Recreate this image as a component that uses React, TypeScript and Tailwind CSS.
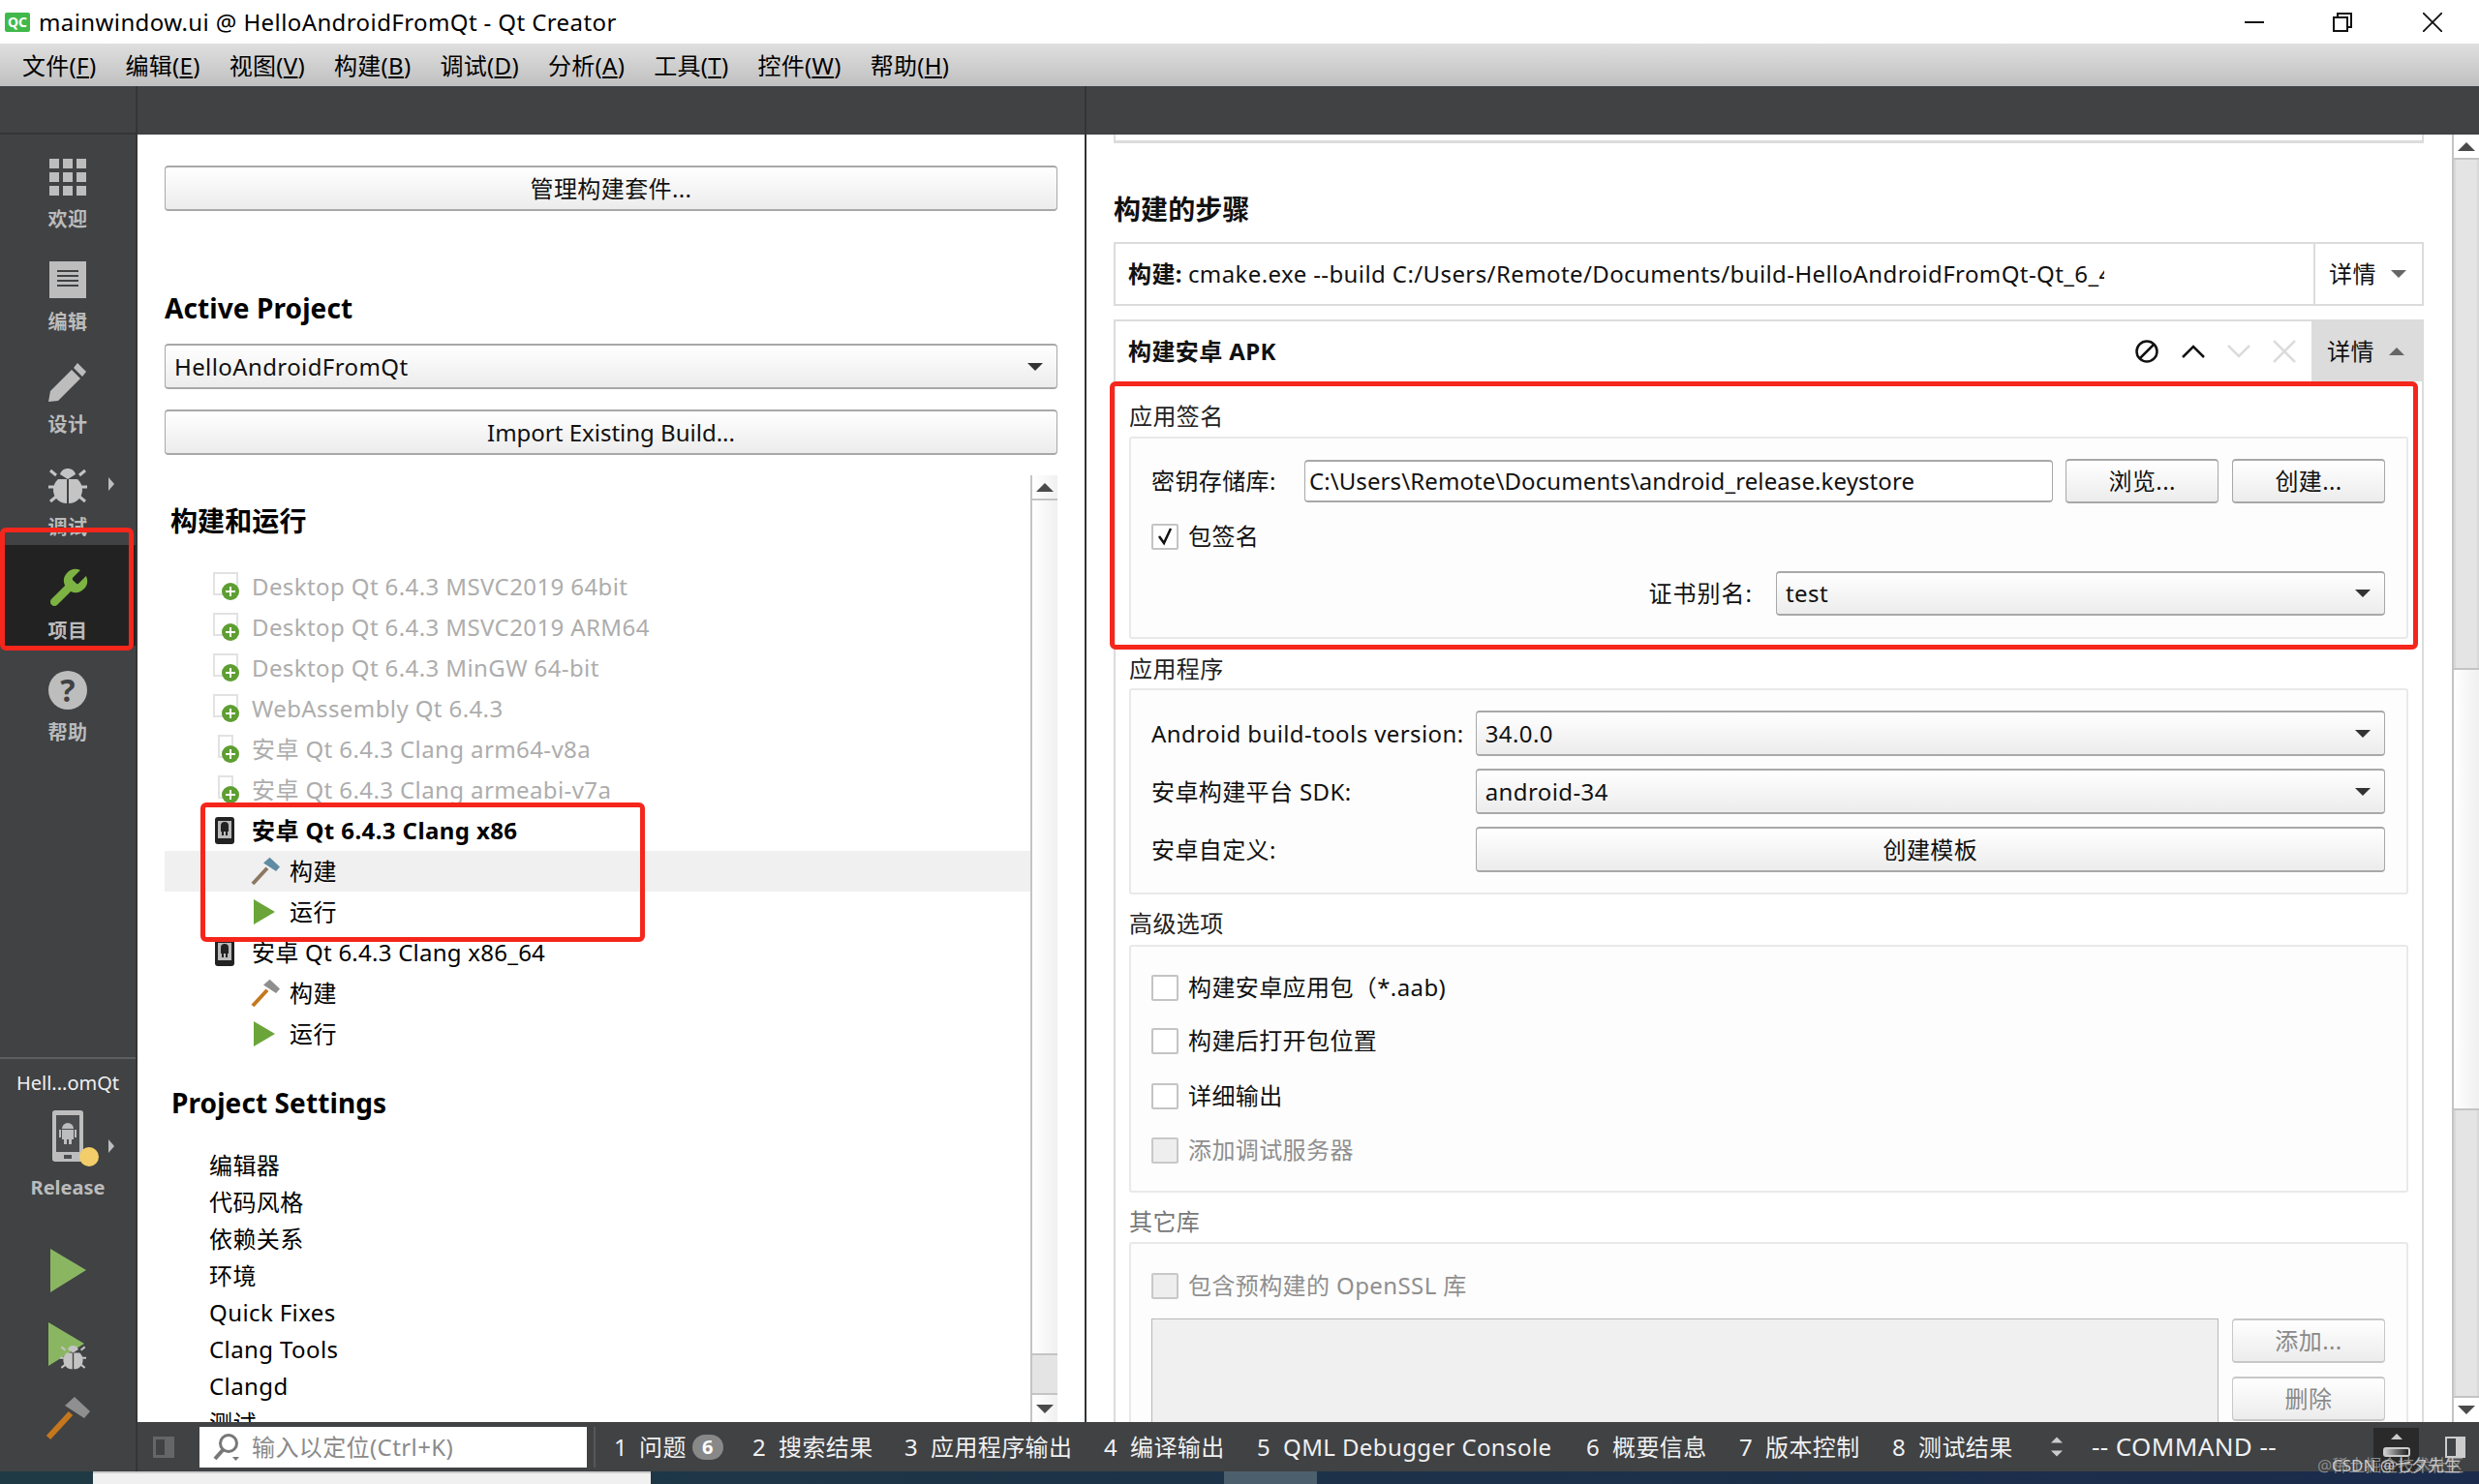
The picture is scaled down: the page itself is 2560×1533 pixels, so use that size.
import React from "react";

const GridIcon = () => (
  <svg width="38" height="38" viewBox="0 0 38 38" fill="#bdbdbd">
    {[0, 14, 28].map((y) => [0, 14, 28].map((x) => <rect key={`${x}-${y}`} x={x} y={y} width="10" height="10" />))}
  </svg>
);
const DocIcon = () => (
  <svg width="38" height="38" viewBox="0 0 38 38">
    <rect width="38" height="38" fill="#bdbdbd" />
    <path d="M8 10h22M8 15h22M8 20h22M8 25h22" stroke="#404244" strokeWidth="2" fill="none" />
  </svg>
);
const PencilIcon = () => (
  <svg width="40" height="40" viewBox="0 0 40 40" fill="#bdbdbd">
    <path d="M30 0l9 9-4 5-9-9z" />
    <path d="M24 7l9 9-23 23L0 40l2-11z" />
  </svg>
);
const BugIcon = ({ s = 40 }: { s?: number }) => (
  <svg width={s} height={s} viewBox="0 0 40 40" fill="#c4c4c4">
    <path d="M12 9c2-8 14-8 16 0l-8 5z" />
    <path d="M19 14v25C10 39 5 32 5 25c0-5 2-8 5-11z" />
    <path d="M21 14v25c9 0 14-7 14-14 0-5-2-8-5-11z" />
    <path d="M8 10L2 5M32 10l6-5M7 22H0M33 22h7M8 32l-6 5M32 32l6 5" stroke="#c4c4c4" strokeWidth="3" fill="none" />
  </svg>
);
const WrenchIcon = () => (
  <svg width="42" height="42" viewBox="1.5 1.5 21 21" fill="#7cb342">
    <path d="M14.7 6.3a1 1 0 0 0 0 1.4l1.6 1.6a1 1 0 0 0 1.4 0l3.77-3.77a6 6 0 0 1-7.94 7.94l-6.91 6.91a2.12 2.12 0 0 1-3-3l6.91-6.91a6 6 0 0 1 7.94-7.94l-3.76 3.76z" />
  </svg>
);
const HelpIcon = () => (
  <div className="flex h-[40px] w-[40px] items-center justify-center rounded-full bg-[#bdbdbd] text-[32px] font-bold leading-none text-[#404244]">?</div>
);
const PhoneSide = () => (
  <svg width="50" height="58" viewBox="0 0 50 58">
    <rect x="0" y="0" width="32" height="53" rx="3" fill="#bdbdbd" />
    <rect x="4" y="5" width="24" height="38" fill="#4a4c4e" />
    <rect x="12" y="46" width="8" height="4" fill="#4a4c4e" />
    <path d="M10 19a6 6 0 0 1 12 0z" fill="#bdbdbd" />
    <rect x="10" y="20" width="12" height="10" fill="#bdbdbd" />
    <rect x="7" y="20" width="2" height="8" fill="#bdbdbd" />
    <rect x="23" y="20" width="2" height="8" fill="#bdbdbd" />
    <rect x="12" y="30" width="3" height="5" fill="#bdbdbd" />
    <rect x="17" y="30" width="3" height="5" fill="#bdbdbd" />
    <circle cx="38" cy="48" r="10" fill="#f3cd69" />
  </svg>
);
const PlayBig = () => (
  <svg width="37" height="45" viewBox="0 0 37 45"><path d="M0 0l37 22L0 45z" fill="#8ab661" /></svg>
);
const PlayDebug = () => (
  <div className="relative h-[46px] w-[40px]">
    <PlayBig />
    <div className="absolute left-[12px] top-[22px]"><BugIcon s={27} /></div>
  </div>
);
const Hammer = ({ head = "#8f8f8f", handle = "#c4771d", s = 46 }: { head?: string; handle?: string; s?: number }) => (
  <svg width={s} height={s} viewBox="0 0 46 46">
    <path d="M26 18L3 43" stroke={handle} strokeWidth="6" fill="none" />
    <path d="M20 10l10-9 16 15-6 7z" fill={head} />
  </svg>
);
const Arrow = ({ up = false, c = "#444", w = 18, h = 9 }: { up?: boolean; c?: string; w?: number; h?: number }) => (
  <svg width={w} height={h} viewBox="0 0 18 9">
    <path d={up ? "M0 9L9 0l9 9z" : "M0 0l9 9 9-9z"} fill={c} />
  </svg>
);
const SideArrow = () => (
  <svg width="6" height="14" viewBox="0 0 6 14"><path d="M0 0l6 7-6 7z" fill="#bdbdbd" /></svg>
);
const KitIcon = ({ narrow = false }: { narrow?: boolean }) => (
  <svg width="30" height="30" viewBox="0 0 30 30">
    <rect x={narrow ? 6 : 1} y="1" width={narrow ? 14 : 24} height="22" fill="none" stroke="#e2e2e2" strokeWidth="2" />
    <circle cx="18" cy="20" r="9" fill="#5e9e32" />
    <path d="M18 15v10M13 20h10" stroke="#fff" strokeWidth="2" />
  </svg>
);
const PhoneDark = () => (
  <svg width="20" height="28" viewBox="0 0 20 28">
    <rect width="20" height="28" rx="3" fill="#222" />
    <rect x="3" y="4" width="14" height="18" fill="#bbb" />
    <path d="M6 9a4 4 0 0 1 8 0v6H6z" fill="#222" />
    <rect x="7" y="15" width="2" height="4" fill="#222" />
    <rect x="11" y="15" width="2" height="4" fill="#222" />
  </svg>
);
const PlaySmall = () => (
  <svg width="22" height="26" viewBox="0 0 22 26"><path d="M0 0l22 13L0 26z" fill="#6ba53a" /></svg>
);

const menuItems: [string, string][] = [
  ["文件", "F"], ["编辑", "E"], ["视图", "V"], ["构建", "B"], ["调试", "D"], ["分析", "A"], ["工具", "T"], ["控件", "W"], ["帮助", "H"],
];

const SideItem = ({ icon, label, h = "h-[106px]", active = false, pt = "pt-[24px]", arrow = false }: { icon: React.ReactNode; label: string; h?: string; active?: boolean; pt?: string; arrow?: boolean }) => (
  <div className={`relative flex flex-col items-center ${h} ${pt} ${active ? "bg-[#222222]" : ""} w-full`}>
    <div className="flex h-[40px] items-center">{icon}</div>
    <div className="mt-[10px] text-[20px] font-bold leading-[28px] text-[#bbbbbb]">{label}</div>
    {arrow && <div className="absolute left-[112px] top-[36px]"><SideArrow /></div>}
  </div>
);

const Sidebar = () => (
  <div className="flex h-[1381px] w-[142px] shrink-0 flex-col border-r-2 border-[#333536] bg-[#404244]">
    <SideItem icon={<GridIcon />} label="欢迎" />
    <SideItem icon={<DocIcon />} label="编辑" />
    <SideItem icon={<PencilIcon />} label="设计" />
    <SideItem icon={<BugIcon />} label="调试" arrow />
    <SideItem icon={<WrenchIcon />} label="项目" h="h-[104px]" active pt="pt-[25px]" />
    <SideItem icon={<HelpIcon />} label="帮助" pt="pt-[26px]" />
    <div className="mt-auto flex h-[428px] flex-col items-center border-t-2 border-[#5c5e60]">
      <div className="mt-[11px] text-[20px] leading-[28px] tracking-normal text-[#f0f0f0]">Hell...omQt</div>
      <div className="relative mt-[14px] flex h-[58px] w-full justify-center pl-[18px]">
        <PhoneSide />
        <div className="absolute left-[112px] top-[30px]"><SideArrow /></div>
      </div>
      <div className="mt-[8px] text-[20px] font-bold leading-[28px] tracking-normal text-[#bbbbbb]">Release</div>
      <div className="mt-[49px]"><PlayBig /></div>
      <div className="mt-[31px]"><PlayDebug /></div>
      <div className="mt-[30px]"><Hammer /></div>
    </div>
  </div>
);

const Btn = ({ children, className = "", disabled = false }: { children: React.ReactNode; className?: string; disabled?: boolean }) => (
  <div className={`flex items-center justify-center rounded-[4px] border-x border-y-2 border-[#a8a8a8] bg-gradient-to-b from-white to-[#ececec] ${disabled ? "text-[#8a8a8a] border-[#c8c8c8]" : "text-[#111]"} ${className}`}>
    {children}
  </div>
);
const Combo = ({ text, className = "" }: { text: string; className?: string }) => (
  <div className={`flex items-center justify-between rounded-[4px] border-x border-y-2 border-[#a8a8a8] bg-gradient-to-b from-white to-[#ececec] pl-[9px] pr-[14px] text-[#111] ${className}`}>
    <span>{text}</span>
    <Arrow c="#333" w={16} h={8} />
  </div>
);

const kits: [string, boolean][] = [
  ["Desktop Qt 6.4.3 MSVC2019 64bit", false],
  ["Desktop Qt 6.4.3 MSVC2019 ARM64", false],
  ["Desktop Qt 6.4.3 MinGW 64-bit", false],
  ["WebAssembly Qt 6.4.3", false],
  ["安卓 Qt 6.4.3 Clang arm64-v8a", true],
  ["安卓 Qt 6.4.3 Clang armeabi-v7a", true],
];

const TreeRow = ({ icon, text, indent, className = "" }: { icon: React.ReactNode; text: string; indent: "kit" | "sub"; className?: string }) => (
  <div className={`flex h-[42px] items-center ${className}`}>
    {indent === "kit" ? (
      <div className="ml-[50px] flex w-[40px] items-center">{icon}</div>
    ) : (
      <div className="ml-[89px] flex w-[40px] items-center">{icon}</div>
    )}
    <span>{text}</span>
  </div>
);

const settings = ["编辑器", "代码风格", "依赖关系", "环境", "Quick Fixes", "Clang Tools", "Clangd", "测试"];

const LeftPanel = () => (
  <div className="flex h-[1330px] w-[978px] shrink-0 flex-col bg-white pl-[28px] text-[24px] leading-[30px]">
    <div className="w-[922px]">
      <Btn className="mt-[32px] h-[47px] w-full">管理构建套件...</Btn>
      <div className="flex h-[137px] items-center pt-[63px] text-[28px] font-bold tracking-[0.1px]">Active Project</div>
      <Combo text="HelloAndroidFromQt" className="h-[47px] w-full" />
      <Btn className="mt-[21px] h-[47px] w-full tracking-normal">Import Existing Build...</Btn>
    </div>
    <div className="mt-[21px] flex h-[978px] w-[922px] overflow-hidden">
      <div className="w-[894px] shrink-0 overflow-hidden">
        <div className="flex h-[94px] items-center pl-[6px] text-[28px] font-bold tracking-[0.1px]">构建和运行</div>
        {kits.map(([t, narrow]) => (
          <TreeRow key={t} icon={<KitIcon narrow={narrow} />} text={t} indent="kit" className="text-[#adadad]" />
        ))}
        <TreeRow icon={<div className="ml-[2px]"><PhoneDark /></div>} text="安卓 Qt 6.4.3 Clang x86" indent="kit" className="font-bold text-black" />
        <TreeRow icon={<Hammer s={30} head="#5f8ba3" handle="#8c7762" />} text="构建" indent="sub" className="bg-[#f0f0f0]" />
        <TreeRow icon={<div className="ml-[3px]"><PlaySmall /></div>} text="运行" indent="sub" />
        <TreeRow icon={<div className="ml-[2px]"><PhoneDark /></div>} text="安卓 Qt 6.4.3 Clang x86_64" indent="kit" className="tracking-[0.25px]" />
        <TreeRow icon={<Hammer s={30} head="#8f8f8f" handle="#c4771d" />} text="构建" indent="sub" />
        <TreeRow icon={<div className="ml-[3px]"><PlaySmall /></div>} text="运行" indent="sub" />
        <div className="flex h-[96px] items-center pl-[7px] pt-[4px] text-[28px] font-bold tracking-[0.1px]">Project Settings</div>
        {settings.map((s) => (
          <div key={s} className="flex h-[38px] items-center pl-[46px]">{s}</div>
        ))}
      </div>
      <div className="flex w-[28px] shrink-0 flex-col border-l-2 border-[#c4c4c4] bg-gradient-to-r from-white to-[#f0f0f0]">
        <div className="flex h-[26px] items-center justify-center border-b-2 border-[#c4c4c4]"><Arrow up c="#4a4a4a" /></div>
        <div className="flex-1" />
        <div className="h-[43px] border-y-2 border-[#c4c4c4] bg-[#e4e4e4]" />
        <div className="flex h-[28px] items-center justify-center"><Arrow c="#4a4a4a" /></div>
      </div>
    </div>
  </div>
);

const Group = ({ title, className, children, labelH, disabled = false }: { title: string; className: string; children: React.ReactNode; labelH: string; disabled?: boolean }) => (
  <>
    <div className={`flex items-center ${labelH} ${disabled ? "text-[#777]" : "text-[#222]"}`}>{title}</div>
    <div className={`w-[1321px] rounded-[3px] border-2 border-[#e9e9e9] bg-[#fdfdfd] pl-[21px] pr-[22px] ${className}`}>{children}</div>
  </>
);

const Check = ({ label, checked = false, disabled = false, className = "" }: { label: string; checked?: boolean; disabled?: boolean; className?: string }) => (
  <div className={`flex items-center gap-[10px] ${disabled ? "text-[#8f8f8f]" : "text-[#111]"} ${className}`}>
    <div className={`flex h-[27px] w-[28px] items-center justify-center rounded-[2px] border-2 ${disabled ? "border-[#c8c8c8] bg-[#eeeeee]" : "border-[#c4c4c4] bg-white"}`}>
      {checked && (
        <svg width="20" height="20" viewBox="0 0 20 20"><path d="M4 10l5 7 7-15" stroke="#111" strokeWidth="2.5" fill="none" /></svg>
      )}
    </div>
    <span>{label}</span>
  </div>
);

const RightPanel = () => (
  <div className="flex h-[1330px] flex-1 border-l-2 border-[#333536] bg-white text-[24px] leading-[30px] text-[#111]">
    <div className="w-[1410px] shrink-0 overflow-hidden pl-[28px]">
      <div className="h-[9px] w-[1353px] border-x-2 border-b-[3px] border-[#dcdcdc]" />
      <div className="flex h-[102px] items-center pt-[34px] text-[28px] font-bold tracking-[0.1px]">构建的步骤</div>
      <div className="flex h-[66px] w-[1353px] border-2 border-[#dcdcdc]">
        <div className="flex w-[1021px] items-center overflow-hidden whitespace-nowrap pl-[13px]">
          <b className="mr-[6px]">构建:</b>cmake.exe --build C:/Users/Remote/Documents/build-HelloAndroidFromQt-Qt_6_4_3_Clang
        </div>
        <div className="ml-[216px] flex flex-1 items-center border-l-2 border-[#dcdcdc] pl-[14px]">
          详情<span className="ml-[15px]"><Arrow c="#666" w={16} h={8} /></span>
        </div>
      </div>
      <div className="mt-[14px] w-[1353px] border-x-2 border-t-2 border-[#dcdcdc] pb-[200px]">
        <div className="flex h-[62px] items-center">
          <div className="ml-[13px] font-bold">构建安卓 APK</div>
          <div className="ml-auto flex items-center">
            <svg width="26" height="26" viewBox="0 0 26 26" fill="none" stroke="#111" strokeWidth="2.5"><circle cx="13" cy="13" r="10.5" /><path d="M6 20L20 6" /></svg>
            <svg className="ml-[23px]" width="24" height="14" viewBox="0 0 24 14" fill="none" stroke="#111" strokeWidth="2.5"><path d="M1 13L12 2l11 11" /></svg>
            <svg className="ml-[23px]" width="24" height="14" viewBox="0 0 24 14" fill="none" stroke="#dcdcdc" strokeWidth="2.5"><path d="M1 1l11 11L23 1" /></svg>
            <svg className="ml-[23px]" width="24" height="24" viewBox="0 0 24 24" fill="none" stroke="#dcdcdc" strokeWidth="2.5"><path d="M1 1l22 22M23 1L1 23" /></svg>
            <div className="ml-[16px] flex h-[62px] w-[114px] items-center bg-[#dcdcdc] pl-[16px]">
              详情<span className="ml-[15px]"><Arrow up c="#666" w={16} h={8} /></span>
            </div>
          </div>
        </div>
        <div className="pl-[14px]">
          <Group title="应用签名" labelH="h-[57px] pt-[15px]" className="h-[209px] pt-[21px]">
            <div className="flex h-[46px] items-center">
              <span className="w-[158px] whitespace-nowrap">密钥存储库:</span>
              <div className="flex h-[44px] w-[774px] items-center rounded-[4px] border-x border-y-2 border-[#a8a8a8] bg-white pl-[4px] tracking-[0.1px]">C:\Users\Remote\Documents\android_release.keystore</div>
              <Btn className="ml-[13px] h-[46px] w-[158px]">浏览...</Btn>
              <Btn className="ml-[14px] h-[46px] w-[158px]">创建...</Btn>
            </div>
            <Check label="包签名" checked className="mt-[20px] h-[28px]" />
            <div className="mt-[22px] flex h-[46px] items-center justify-end">
              <span className="mr-[24px] tracking-[1px]">证书别名:</span>
              <Combo text="test" className="h-[46px] w-[629px]" />
            </div>
          </Group>
          <Group title="应用程序" labelH="h-[51px] pt-[10px]" className="h-[213px] pt-[21px]">
            {[["Android build-tools version:", "34.0.0"], ["安卓构建平台 SDK:", "android-34"]].map(([l, v]) => (
              <div key={l} className="mb-[13px] flex h-[47px] items-center">
                <span className="w-[335px] whitespace-nowrap">{l}</span>
                <Combo text={v} className="h-[47px] w-[940px]" />
              </div>
            ))}
            <div className="flex h-[47px] items-center">
              <span className="w-[335px]">安卓自定义:</span>
              <Btn className="h-[47px] w-[940px]">创建模板</Btn>
            </div>
          </Group>
          <Group title="高级选项" labelH="h-[52px] pt-[8px]" className="h-[256px] pt-[28px]">
            <Check label="构建安卓应用包（*.aab)" className="h-[28px]" />
            <Check label="构建后打开包位置" className="mt-[27px] h-[28px]" />
            <Check label="详细输出" className="mt-[29px] h-[28px]" />
            <Check label="添加调试服务器" disabled className="mt-[28px] h-[28px]" />
          </Group>
          <Group title="其它库" disabled labelH="h-[51px] pt-[8px]" className="h-[240px] pt-[29px]">
            <Check label="包含预构建的 OpenSSL 库" disabled className="h-[28px]" />
            <div className="mt-[20px] flex">
              <div className="h-[200px] w-[1103px] border border-[#b8b8b8] bg-[#f0f0f0]" />
              <div className="ml-[14px] flex flex-col">
                <Btn disabled className="h-[46px] w-[158px]">添加...</Btn>
                <Btn disabled className="mt-[14px] h-[46px] w-[158px]">删除</Btn>
              </div>
            </div>
          </Group>
        </div>
      </div>
    </div>
    <div className="flex w-[28px] shrink-0 flex-col border-l-2 border-[#c4c4c4]">
      <div className="flex h-[26px] items-center justify-center border-b-2 border-[#c4c4c4]"><Arrow up c="#4a4a4a" /></div>
      <div className="h-[525px] border-x-2 border-[#d8d8d8] bg-[#e4e4e4]" />
      <div className="h-[457px] border-y-2 border-[#c4c4c4] bg-gradient-to-r from-white to-[#f0f0f0]" />
      <div className="h-[295px] border-x-2 border-[#d8d8d8] bg-[#e4e4e4]" />
      <div className="flex h-[27px] items-center justify-center border-t-2 border-[#c4c4c4]"><Arrow c="#4a4a4a" /></div>
    </div>
  </div>
);

const outputs: [string, string, string][] = [
  ["2", "搜索结果", "w-[157px]"],
  ["3", "应用程序输出", "w-[206px]"],
  ["4", "编译输出", "w-[158px]"],
  ["5", "QML Debugger Console", "w-[340px]"],
  ["6", "概要信息", "w-[158px]"],
  ["7", "版本控制", "w-[158px]"],
  ["8", "测试结果", "w-[163px]"],
];

const BottomBar = () => (
  <div className="flex h-[51px] items-center bg-[#404244] text-[24px] text-[#f0f0f0]">
    <div className="ml-[16px] h-[22px] w-[22px] border-[3px] border-[#666] border-r-[10px]" />
    <div className="ml-[26px] flex h-[42px] w-[400px] items-center bg-white pl-[14px] text-[#8a8a8a]">
      <svg width="28" height="30" viewBox="0 0 28 30" fill="none" stroke="#777" strokeWidth="3">
        <circle cx="16" cy="11" r="8.5" />
        <path d="M10 18L2 27" strokeWidth="4" />
        <path d="M20 25h7l-3.500 4z" fill="#777" stroke="none" />
      </svg>
      <span className="ml-[12px]">输入以定位(Ctrl+K)</span>
    </div>
    <div className="ml-[7px] h-[42px] w-[2px] bg-[#555759]" />
    <div className="ml-[19px] flex w-[143px] items-center">
      <span className="w-[26px]">1</span>
      <span>问题</span>
      <span className="ml-[6px] flex h-[26px] w-[32px] items-center justify-center rounded-full bg-[#888] text-[20px] font-bold text-white">6</span>
    </div>
    {outputs.map(([n, t, w]) => (
      <div key={n} className={`flex items-center whitespace-nowrap ${w}`}>
        <span className="w-[27px]">{n}</span>
        <span>{t}</span>
      </div>
    ))}
    <div className="flex w-[43px] flex-col gap-[7px] pl-[1px]">
      <Arrow up c="#ccc" w={12} h={7} />
      <Arrow c="#ccc" w={12} h={7} />
    </div>
    <div className="whitespace-nowrap text-[26px]">-- COMMAND --</div>
    <div className="ml-auto mt-[6px] flex h-[45px] w-[47px] flex-col items-center self-start bg-[#2a2a2a] pt-[6px]">
      <Arrow up c="#ccc" w={12} h={6} />
      <div className="mt-[8px] h-[10px] w-[28px] rounded-[3px] border-2 border-[#ccc] bg-gradient-to-r from-[#ccc] to-[#222]" />
    </div>
    <div className="ml-[27px] mr-[14px] h-[22px] w-[21px] border-2 border-[#ccc] bg-gradient-to-r from-transparent from-50% to-[#ccc] to-50%" />
  </div>
);

export default function App() {
  return (
    <div className="relative h-[1533px] w-[2560px] overflow-hidden bg-white font-['Noto_Sans','Noto_Sans_CJK_SC',sans-serif] tracking-[0.4px]">
      <div className="flex h-[45px] items-center bg-white text-black">
        <div className="ml-[5px] flex h-[20px] w-[26px] items-center justify-center rounded-[2px] bg-[#41b94a] text-[14px] font-bold tracking-normal text-white">QC</div>
        <span className="ml-[9px] text-[24px]">mainwindow.ui @ HelloAndroidFromQt - Qt Creator</span>
        <div className="ml-auto flex items-center pr-[38px]">
          <svg width="20" height="20" viewBox="0 0 20 20" stroke="#111" strokeWidth="2" fill="none"><path d="M0 10h20" /></svg>
          <svg className="ml-[71px]" width="20" height="20" viewBox="0 0 20 20" stroke="#111" strokeWidth="2" fill="none"><rect x="1" y="5" width="14" height="14" /><path d="M5 5V1h14v14h-4" /></svg>
          <svg className="ml-[73px]" width="20" height="20" viewBox="0 0 20 20" stroke="#111" strokeWidth="1.800" fill="none"><path d="M0 0l20 20M20 0L0 20" /></svg>
        </div>
      </div>
      <div className="flex h-[44px] items-center bg-gradient-to-b from-[#dfdfdf] to-[#c0c0c0] pl-[8px] pt-[2px] text-[24px] tracking-[0.3px] text-black">
        {menuItems.map(([t, k]) => (
          <span key={k} className="whitespace-nowrap px-[15px]">{t}(<u>{k}</u>)</span>
        ))}
      </div>
      <div className="flex h-[50px] bg-[#404244]">
        <div className="w-[142px] border-b-2 border-r-2 border-[#333536]" />
        <div className="w-[978px]" />
        <div className="w-[2px] bg-[#333536]" />
      </div>
      <div className="flex h-[1381px]">
        <Sidebar />
        <div className="flex w-[2418px] flex-col">
          <div className="flex h-[1330px]">
            <LeftPanel />
            <RightPanel />
          </div>
          <BottomBar />
        </div>
      </div>
      <div className="flex h-[13px] bg-gradient-to-r from-[#1f3a44] to-[#1b2b4c]">
        <div className="ml-[96px] w-[576px] border-t-2 border-[#cccccc] bg-[#f0f0f0]" />
        <div className="ml-[592px] w-[96px] bg-[#4b606c]" />
      </div>
      <div className="absolute left-0 top-[545px] h-[127px] w-[138px] rounded-[6px] border-[5px] border-[#f5261b]" />
      <div className="absolute left-[207px] top-[829px] h-[144px] w-[459px] rounded-[6px] border-[5px] border-[#f5261b]" />
      <div className="absolute left-[1146px] top-[394px] h-[277px] w-[1351px] rounded-[6px] border-[5px] border-[#f5261b]" />
      <div className="absolute left-[2393px] top-[1501px] whitespace-nowrap text-[17px] tracking-normal text-[#8a8a8a]">@稀土掘金技术社区</div>
      <div className="absolute left-[2408px] top-[1501px] whitespace-nowrap text-[17px] tracking-normal text-[#c8c8c8]">CSDN @七夕先生</div>
    </div>
  );
}
